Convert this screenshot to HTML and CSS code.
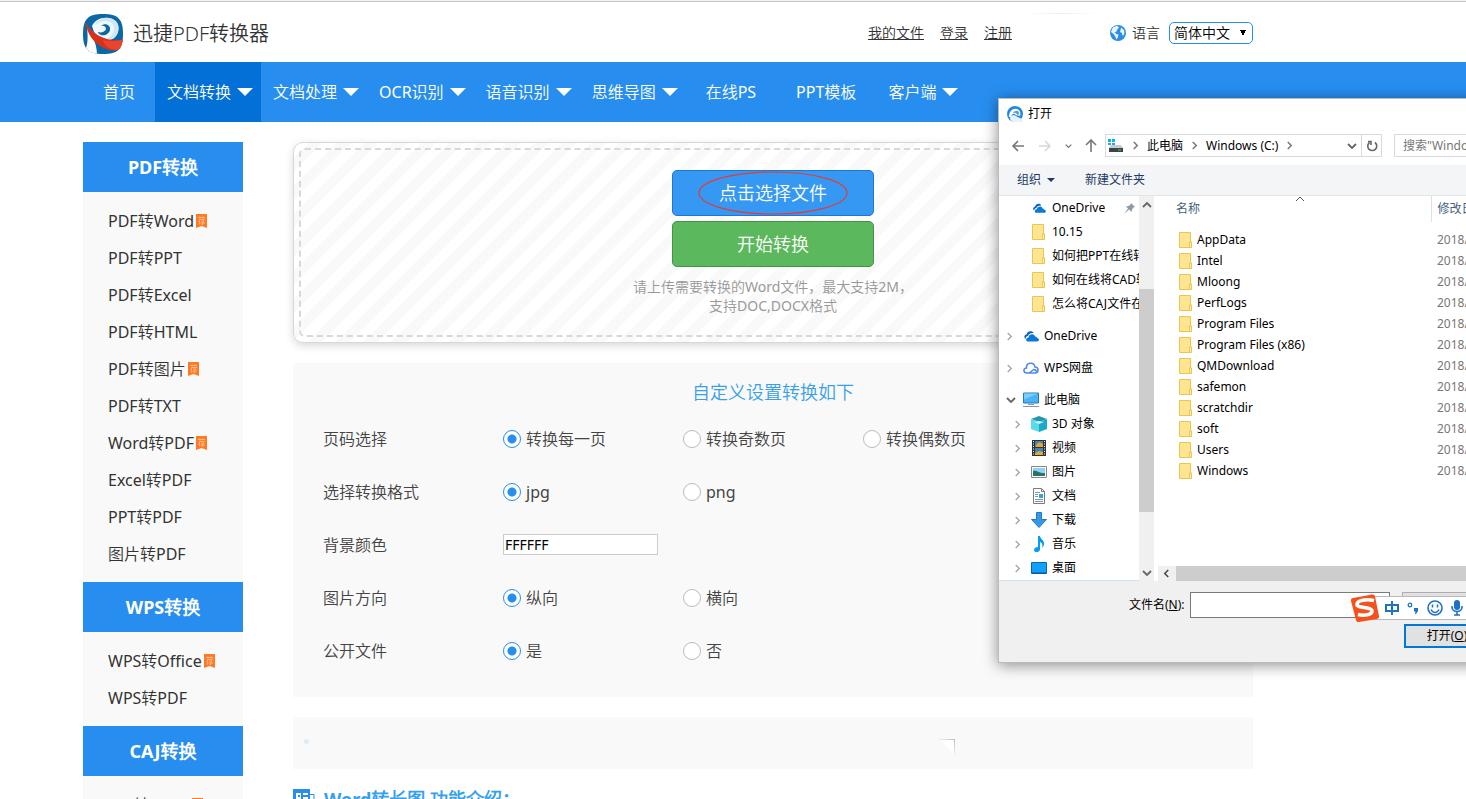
FILE: index.html
```html
<!DOCTYPE html>
<html lang="zh-CN">
<head>
<meta charset="utf-8">
<title>迅捷PDF转换器</title>
<link rel="stylesheet" href="styles.css">
</head>
<body>
<svg class="defs" aria-hidden="true">
  <symbol id="folder" viewBox="0 0 14 16"><path d="M.5.5h11v9.5h1v5.5H.5z" fill="#ffe58f" stroke="#e8c650"/><path d="M10.500 15.500v-5.500h2v5.500z" fill="#ffefb5" stroke="#e8c650"/></symbol>
  <symbol id="cloud" viewBox="0 0 16 12"><path d="M2 8.500C.5 6.500 2 4.500 3.500 4.500 4 1.500 7 .5 9 1.500c1 .5 1.500 1 1.800 1.700C8 2.800 5.500 4 5 6 3.500 6.200 2.800 7 2.600 8.700z" fill="#0f62b8"/><path d="M5 11.500c-2.500 0-2.500-4 .5-4C6 4 11 3 12 6.500c1.500-.3 2 .8 2 1.500 2.500 0 2.500 3.500 0 3.500z" fill="#0a78d7"/></symbol>
  <symbol id="right" viewBox="0 0 8 10"><path d="M2 1l4 4-4 4" fill="none" stroke="currentColor" stroke-width="1.700"/></symbol>
  <symbol id="down" viewBox="0 0 10 8"><path d="M1 2l4 4 4-4" fill="none" stroke="currentColor" stroke-width="1.800"/></symbol>
  <symbol id="tag" viewBox="0 0 11 14"><path d="M0 0h11v14l-5.500-2L0 14z" fill="#ff7a22"/><path d="M2 3.500h7M4 2.500v2M7 2.500v2M3 5.500h6M4.500 5L2.500 8M3.500 7v3.500M5 7h3L6.500 8.500v2H5.500M4.500 9H9" stroke="#ffd9bd" stroke-width=".6" fill="none"/></symbol>
</svg>

<div class="page">
  <header class="header">
    <div class="container header-row">
      <a class="brand" href="#">
        <svg width="42" height="42" viewBox="0 0 42 42" aria-hidden="true">
          <defs><clipPath id="logo"><path d="M20 1C35 1 40 6 40 21s-5 20-20 20S0 36 0 21 5 1 20 1z"/></clipPath></defs>
          <g clip-path="url(#logo)">
            <path d="M0 0h42v42H0z" fill="#0a68a5"/>
            <path d="M4 14c4 9 10 14 10 28H5L2 37c3-5 3-14 2-23z" fill="#fff"/>
            <path d="M9 13C12 7 18 4 25 5c8 1 12 7 10 14-2 7-9 10-17 8l-7-8z" fill="#eff8fd"/>
            <path d="M26 5c8 1 11 7 9 14-2 6-9 9-15 7 6 0 11-4 11-10 0-5-3-8-9-8-4 0-8 2-10 5C13 8 20 4 26 5z" fill="#cfe7f6"/>
            <path d="M18 13c4-4 10-1 9 4-1 4-5 6-9 5-2-1-3-2-3-3 3 1 7 0 8-3 0-2-2-4-5-3z" fill="#0a68a5"/>
            <path d="M2 9c8 12 18 20 40 18v7c-7 5-16 4-23 0C10 29 5 22 2 9z" fill="#d7301b"/>
            <path d="M20 27c8 2 14 1 22-1v7c-5 4-11 5-16 2-2-1-6-6-6-8z" fill="#e8452e"/>
          </g>
        </svg>
        <span>迅捷PDF转换器</span>
      </a>
      <nav class="account">
        <a href="#">我的文件</a><a href="#">登录</a><a href="#">注册</a>
      </nav>
      <span class="faded"></span>
      <div class="lang">
        <svg width="16" height="16" viewBox="0 0 16 16" aria-hidden="true"><circle cx="8" cy="8" r="8" fill="#2a8ee8"/><path d="M2.500 3C4 1.500 6 1 7.500 1L9 2.500 7 5l-1 2-1.500.5 2 1.500 2 .5L8 12l-1.500 2.500L5 11 3.500 9 1 7zM11 2.500l3 2.500.5 3-1.500 3-1-1.500V8l-2-1 .500-2z" fill="#e6f4ff"/></svg>
        <label for="lang">语言</label>
        <select id="lang"><option>简体中文</option></select>
      </div>
    </div>
  </header>

  <nav class="mainnav">
    <div class="container nav-row">
      <a class="plain" href="#">首页</a>
      <a class="drop active" href="#">文档转换</a>
      <a class="drop" href="#">文档处理</a>
      <a class="drop" href="#">OCR识别</a>
      <a class="drop" href="#">语音识别</a>
      <a class="drop" href="#">思维导图</a>
      <a class="plain" href="#">在线PS</a>
      <a class="plain" href="#">PPT模板</a>
      <a class="drop" href="#">客户端</a>
    </div>
  </nav>

  <div class="container columns">
    <aside class="side">
      <h2>PDF转换</h2>
      <ul>
        <li><a href="#">PDF转Word<svg class="tag"><use href="#tag"/></svg></a></li>
        <li><a href="#">PDF转PPT</a></li>
        <li><a href="#">PDF转Excel</a></li>
        <li><a href="#">PDF转HTML</a></li>
        <li><a href="#">PDF转图片<svg class="tag"><use href="#tag"/></svg></a></li>
        <li><a href="#">PDF转TXT</a></li>
        <li><a href="#">Word转PDF<svg class="tag"><use href="#tag"/></svg></a></li>
        <li><a href="#">Excel转PDF</a></li>
        <li><a href="#">PPT转PDF</a></li>
        <li><a href="#">图片转PDF</a></li>
      </ul>
      <h2>WPS转换</h2>
      <ul>
        <li><a href="#">WPS转Office<svg class="tag"><use href="#tag"/></svg></a></li>
        <li><a href="#">WPS转PDF</a></li>
      </ul>
      <h2>CAJ转换</h2>
      <ul>
        <li><a href="#">CAJ转Word<svg class="tag"><use href="#tag"/></svg></a></li>
      </ul>
    </aside>

    <main class="main">
      <section class="upload">
        <div class="dropzone">
          <button class="btn pick" type="button">点击选择文件
            <svg class="ring" viewBox="0 0 150 44" aria-hidden="true"><ellipse cx="75" cy="22" rx="74" ry="21" fill="none" stroke="#e23b3b" stroke-width="1.200"/></svg>
          </button>
          <button class="btn start" type="button">开始转换</button>
          <p>请上传需要转换的Word文件，最大支持2M，<br>支持DOC,DOCX格式</p>
        </div>
      </section>

      <form class="settings">
        <h3>自定义设置转换如下</h3>
        <div class="row" role="radiogroup" aria-labelledby="l1"><span id="l1">页码选择</span>
          <label><input type="radio" name="pages" checked>转换每一页</label>
          <label><input type="radio" name="pages">转换奇数页</label>
          <label><input type="radio" name="pages">转换偶数页</label></div>
        <div class="row" role="radiogroup" aria-labelledby="l2"><span id="l2">选择转换格式</span>
          <label><input type="radio" name="format" checked>jpg</label>
          <label><input type="radio" name="format">png</label></div>
        <div class="row"><label for="bg">背景颜色</label><input class="color" id="bg" type="text" value="FFFFFF"></div>
        <div class="row" role="radiogroup" aria-labelledby="l3"><span id="l3">图片方向</span>
          <label><input type="radio" name="orient" checked>纵向</label>
          <label><input type="radio" name="orient">横向</label></div>
        <div class="row" role="radiogroup" aria-labelledby="l4"><span id="l4">公开文件</span>
          <label><input type="radio" name="public" checked>是</label>
          <label><input type="radio" name="public">否</label></div>
      </form>

      <div class="strip">
        <i class="dot"></i>
        <svg class="corner" viewBox="0 0 18 18" aria-hidden="true">
          <defs>
            <linearGradient id="fadex"><stop offset="0" stop-color="#bbb" stop-opacity="0"/><stop offset="1" stop-color="#bbb"/></linearGradient>
            <linearGradient id="fadey" x2="0" y2="1"><stop offset="0" stop-color="#bbb"/><stop offset="1" stop-color="#bbb" stop-opacity="0"/></linearGradient>
          </defs>
          <path d="M4 1h13v14z" fill="#fff"/><path d="M0 0h18v1H0z" fill="url(#fadex)"/><path d="M17 0h1v18h-1z" fill="url(#fadey)"/>
        </svg>
      </div>

      <h3 class="intro">
        <svg width="22" height="20" viewBox="0 0 22 20" aria-hidden="true"><path d="M0 0h17v20H0z" fill="#278ef0"/><path d="M3 4h5v6H3zM10 4h5v2h-5zM10 8h5v2h-5zM3 12h12v2H3z" fill="#fff"/><path d="M5 6h2v2H5z" fill="#278ef0"/><path d="M17 5.500h4v14h-4" fill="none" stroke="#278ef0"/></svg>
        Word转长图 功能介绍：
      </h3>
    </main>
  </div>

  <div class="dialog" role="dialog" aria-label="打开">
    <div class="titlebar">
      <svg width="16" height="16" viewBox="0 0 16 16" aria-hidden="true"><circle cx="8" cy="8" r="8" fill="#2886dc"/><path d="M2 11C2 5 6 2 10 3c3 1 4 4 3 7-2-1-3 0-4-1-2-2-4-2-5 2z" fill="#fff"/><path d="M9 5c3-1 4 3 2 4-1 0-2-3-5-2 0-1 1-2 3-2z" fill="#4f9de6"/><path d="M3 12c1-3 4-4 6-2s4 1 7 4v2H7c-2 0-4-2-4-4z" fill="#e8f2fc"/></svg>
      打开
    </div>
    <div class="address">
      <div class="arrows">
        <svg width="14" height="12" viewBox="0 0 14 12"><path d="M7 1L2 6l5 5M2 6h11" fill="none" stroke="#777" stroke-width="1.600"/></svg>
        <svg width="14" height="12" viewBox="0 0 14 12"><path d="M7 1l5 5-5 5M12 6H1" fill="none" stroke="#d8d8d8" stroke-width="1.600"/></svg>
        <svg width="7" height="6" viewBox="0 0 10 8" class="dim"><use href="#down"/></svg>
        <svg width="12" height="13" viewBox="0 0 12 13"><path d="M1 6l5-5 5 5M6 1v12" fill="none" stroke="#777" stroke-width="1.600"/></svg>
      </div>
      <div class="path">
        <svg width="16" height="14" viewBox="0 0 16 14"><path d="M0 0h3v3H0zM4 0h3v3H4zM0 4h3v2H0zM4 4h3v2H4z" fill="#12b0ef"/><path d="M3 6h10l2 3H1z" fill="#c9cccf"/><path d="M1 9h14v4H1z" fill="#3f4448"/><path d="M10 10.500h3v1h-3z" fill="#36d23f"/></svg>
        <svg class="chev"><use href="#right"/></svg><span>此电脑</span>
        <svg class="chev"><use href="#right"/></svg><span>Windows (C:)</span>
        <svg class="chev"><use href="#right"/></svg>
        <svg class="chev-down"><use href="#down"/></svg>
      </div>
      <button class="refresh" type="button" aria-label="刷新"><svg width="12" height="12" viewBox="0 0 12 12"><path d="M9 2.500a4.500 4.500 0 1 1-5.500 0M2 1.500h3v3.500" fill="none" stroke="#666" stroke-width="1.600"/></svg></button>
      <input class="search" type="search" aria-label="搜索" placeholder="搜索&quot;Windows (C:)&quot;">
    </div>
    <div class="toolbar">
      <button type="button">组织<i class="caret"></i></button>
      <button type="button">新建文件夹</button>
    </div>
    <div class="panes">
      <ul class="tree">
        <li class="quick"><svg class="i16"><use href="#cloud"/></svg><span>OneDrive</span><svg class="pin" width="11" height="11" viewBox="0 0 11 11"><path d="M7 0l4 4-1.500.5L8 6.500 7.500 9 5 6.500 0 11l4-5.500L2 3.500 4.500 3 6.500 1.500z" fill="#8d9ba8"/></svg></li>
        <li class="quick"><svg class="fold"><use href="#folder"/></svg><span>10.15</span></li>
        <li class="quick"><svg class="fold"><use href="#folder"/></svg><span>如何把PPT在线转</span></li>
        <li class="quick"><svg class="fold"><use href="#folder"/></svg><span>如何在线将CAD转</span></li>
        <li class="quick"><svg class="fold"><use href="#folder"/></svg><span>怎么将CAJ文件在</span></li>
        <li class="root"><svg class="chev"><use href="#right"/></svg><svg class="i16"><use href="#cloud"/></svg><span>OneDrive</span></li>
        <li class="root"><svg class="chev"><use href="#right"/></svg><svg class="i16" viewBox="0 0 16 12"><path d="M4 11C0 11 0 6 3.500 6 3 0 11-.5 12 5c4 0 4 6 0 6zM6 11l5-3.500c2 0 3 2 2 3" fill="none" stroke="#4e86ea" stroke-width="1.500"/></svg><span>WPS网盘</span></li>
        <li class="root"><svg class="chev-down dark"><use href="#down"/></svg><svg class="i16" viewBox="0 0 16 15"><path d="M.5.500h15v10H.5z" fill="#46b4f5" stroke="#2679b5"/><path d="M1 7L15 1H1z" fill="#7dccfa"/><path d="M0 14h16M5 12h6" stroke="#8496a6"/></svg><span>此电脑</span></li>
        <li class="child"><svg class="chev"><use href="#right"/></svg><svg class="i16" viewBox="0 0 16 16"><path d="M0 3l8-3 8 3-8 3z" fill="#2396ac"/><path d="M0 3l8 3v10l-8-3z" fill="#5ddae8"/><path d="M16 3L8 6v10l8-3z" fill="#19a9cb"/><path d="M3 6l5-1 5 1-5 2z" fill="#c4f5fa"/></svg><span>3D 对象</span></li>
        <li class="child"><svg class="chev"><use href="#right"/></svg><svg class="i16" viewBox="0 0 16 16"><path d="M1 0h14v16H1z" fill="#333"/><path d="M4 1h8v6H4zM4 8h8v7H4z" fill="#3b82cc"/><path d="M5 5l3-3 4 2v3H5zM4 13l4-2 4 1v3H4z" fill="#e3a72b"/><path d="M2.500 1v15M13.500 1v15" stroke="#eee" stroke-dasharray="1 1.500"/></svg><span>视频</span></li>
        <li class="child"><svg class="chev"><use href="#right"/></svg><svg class="i16" viewBox="0 0 16 12"><path d="M.5.500h15v11H.5z" fill="#fff" stroke="#888"/><path d="M2 2h12v8H2z" fill="#8fd2f5"/><path d="M2 5c4-1 7 3 12 2v3H2z" fill="#2e7266"/></svg><span>图片</span></li>
        <li class="child"><svg class="chev"><use href="#right"/></svg><svg class="i16" viewBox="0 0 16 16"><path d="M2.500.500h8l3 3v12h-11z" fill="#fff" stroke="#7c7c7c"/><path d="M10.500.500v3h3" fill="none" stroke="#7c7c7c"/><path d="M4 6.500h3M4 8.500h3M4 4.500h5M4 11.500h8M4 13.500h8" stroke="#8794a0"/><path d="M8 6h4v4H8z" fill="#31a2e3"/></svg><span>文档</span></li>
        <li class="child"><svg class="chev"><use href="#right"/></svg><svg class="i16" viewBox="0 0 16 16"><path d="M5.500.500h5v7h5L8 15.500.5 7.500h5z" fill="#3497e8" stroke="#2578bd"/></svg><span>下载</span></li>
        <li class="child"><svg class="chev"><use href="#right"/></svg><svg class="i16" viewBox="0 0 16 16"><path d="M7 0h2c0 3 5 4 4 9-.3 1-1 2-2 3 1-4 0-5-2-6v7c0 4-6 4-6 1 0-2 2-3 4-3z" fill="#069cf4"/></svg><span>音乐</span></li>
        <li class="child"><svg class="chev"><use href="#right"/></svg><svg class="i16" viewBox="0 0 16 12"><path d="M.5.500h15v11H.5z" fill="#12a0ff" stroke="#0b66a5"/><path d="M1 11h14" stroke="#0b528a"/></svg><span>桌面</span></li>
      </ul>
      <div class="vscroll"><svg class="chev-down up"><use href="#down"/></svg><i></i><svg class="chev-down"><use href="#down"/></svg></div>
      <div class="files">
        <table>
          <thead><tr><th class="name">名称<svg class="sort" viewBox="0 0 10 6"><path d="M1 5l4-4 4 4" fill="none" stroke="#555"/></svg></th><th>修改日期</th></tr></thead>
          <tbody>
            <tr><td><svg class="fold"><use href="#folder"/></svg>AppData</td><td>2018/</td></tr>
            <tr><td><svg class="fold"><use href="#folder"/></svg>Intel</td><td>2018/</td></tr>
            <tr><td><svg class="fold"><use href="#folder"/></svg>Mloong</td><td>2018/</td></tr>
            <tr><td><svg class="fold"><use href="#folder"/></svg>PerfLogs</td><td>2018/</td></tr>
            <tr><td><svg class="fold"><use href="#folder"/></svg>Program Files</td><td>2018/</td></tr>
            <tr><td><svg class="fold"><use href="#folder"/></svg>Program Files (x86)</td><td>2018/</td></tr>
            <tr><td><svg class="fold"><use href="#folder"/></svg>QMDownload</td><td>2018/</td></tr>
            <tr><td><svg class="fold"><use href="#folder"/></svg>safemon</td><td>2018/</td></tr>
            <tr><td><svg class="fold"><use href="#folder"/></svg>scratchdir</td><td>2018/</td></tr>
            <tr><td><svg class="fold"><use href="#folder"/></svg>soft</td><td>2018/</td></tr>
            <tr><td><svg class="fold"><use href="#folder"/></svg>Users</td><td>2018/</td></tr>
            <tr><td><svg class="fold"><use href="#folder"/></svg>Windows</td><td>2018/</td></tr>
          </tbody>
        </table>
        <div class="hscroll"><svg class="chev back"><use href="#right"/></svg><i></i></div>
      </div>
    </div>
    <div class="footer">
      <div class="filename">
        <label for="fname">文件名(<u>N</u>):</label>
        <input id="fname" type="text">
        <button class="filter" type="button" aria-label="文件类型"></button>
      </div>
      <button class="open" type="button">打开(<u>O</u>)</button>
    </div>
  </div>

  <div class="ime">
    <svg width="28" height="28" viewBox="0 0 28 28" aria-hidden="true"><path d="M2 4L21 .5c2-.3 2.500.5 3 2L28 22c.3 2-.5 2.500-2 3L8 28c-2 .3-2.500-.5-3-2L0 7c-.3-2 .5-2.700 2-3z" fill="#f4511c"/><path d="M23 6.500C15 5 6 6 6 10.500c0 4 15 2 15 6.500 0 4-8 5-14 3.500" fill="none" stroke="#fff" stroke-width="3.600"/></svg>
    <svg width="14" height="14" viewBox="0 0 14 14" aria-hidden="true"><path d="M1 4h12v6H1zM7 0v14" fill="none" stroke="#1d72c8" stroke-width="2"/></svg>
    <svg width="12" height="12" viewBox="0 0 12 12" aria-hidden="true"><circle cx="3" cy="3" r="1.800" fill="none" stroke="#1d72c8" stroke-width="1.300"/><path d="M7 6h4v3l-2 3H8l.500-2.500H7z" fill="#1d72c8"/></svg>
    <svg width="16" height="16" viewBox="0 0 16 16" aria-hidden="true"><circle cx="8" cy="8" r="7" fill="none" stroke="#1d72c8" stroke-width="1.600"/><path d="M5.500 4.500v3M10.500 4.500v3M4 9.500c2 4 6 4 8 0" fill="none" stroke="#1d72c8" stroke-width="1.500"/></svg>
    <svg width="12" height="16" viewBox="0 0 12 16" aria-hidden="true"><rect x="3" width="6" height="10" rx="3" fill="#1d72c8"/><path d="M1 6v1c0 6 10 6 10 0V6M6 11v4M3 15h6" fill="none" stroke="#1d72c8" stroke-width="1.600"/></svg>
  </div>
</div>
</body>
</html>
```

FILE: styles.css
```css
* { box-sizing: border-box; }
body { margin: 0; background: #fff; color: #333; font: 16px/24px "Noto Sans", "Noto Sans CJK SC DemiLight", "Noto Sans CJK SC", sans-serif; }
h2, h3, p, ul { margin: 0; padding: 0; }
ul { list-style: none; }
a { color: inherit; text-decoration: none; }
button, input, select { font: inherit; color: inherit; }
button { padding: 0; border: 0; background: none; }
svg { flex: none; }
.defs { position: absolute; width: 0; height: 0; }
.page { position: relative; height: 100vh; overflow: hidden; }
.container { max-width: 1170px; margin-left: 83px; }

.header { border-top: 1px solid #f2f2f2; }
.header::before { content: ""; display: block; height: 1px; margin-bottom: -1px; background: #c8c8c8; }
.header-row { display: flex; align-items: center; height: 61px; }
.brand { display: flex; align-items: center; gap: 8px; margin-top: 5px; color: #333; font-size: 20px; font-weight: 300; }
.account { display: flex; gap: 16px; margin-left: auto; margin-top: 2px; font-size: 14px; }
.account a { text-decoration: underline; }
.faded { width: 76px; height: 38px; margin: 0 11px; background: linear-gradient(to right, #fff, #eee, #fff) top / 100% 1px no-repeat; }
.lang { display: flex; align-items: center; gap: 6px; margin-top: 2px; font-size: 14px; }
.lang select { appearance: none; width: 84px; height: 22px; margin-left: 3px; padding: 0 4px; border: 1px solid #278ef0; border-radius: 5px; color: #000; line-height: 20px;
  background: linear-gradient(to bottom right, #000 50%, transparent 50%) 73px 7px / 3px 6px no-repeat, linear-gradient(to bottom left, #000 50%, transparent 50%) 70px 7px / 3px 6px no-repeat, #fff; }

.mainnav { background: #278ef0; color: #fff; }
.nav-row { display: flex; }
.nav-row a { display: flex; align-items: center; height: 60px; }
.plain { padding: 0 20px; }
.drop { padding: 0 8px 0 12px; gap: 6px; }
.drop::after { content: ""; border: 8px solid transparent; border-top-color: #fff; border-bottom: 0; }
.active { background: #0270d6; }

.columns { display: flex; gap: 50px; padding-top: 20px; }
.side { flex: 0 0 160px; background: #f9f9f9; }
.side h2 { background: #278ef0; color: #fff; font-size: 18px; line-height: 50px; text-align: center; }
.side ul { padding: 10px 0 10px 25px; }
.side li a { display: flex; align-items: center; height: 37px; }
.tag { width: 11px; height: 14px; margin-left: 2px; }

.main { flex: 1; min-width: 0; }
.upload { padding: 5px; border: 1px solid #d8d8d8; border-radius: 10px; box-shadow: 0 3px 8px rgba(0,0,0,.15); background: repeating-linear-gradient(135deg, #fff 0 10px, #f9f9f9 10px 20px); }
.dropzone { display: flex; flex-direction: column; align-items: center; padding: 20px 0; border: 2px dashed #d8d8d8; border-radius: 6px; }
.btn { position: relative; width: 202px; height: 46px; margin-bottom: 5px; border-radius: 5px; color: #fff; font-size: 18px; }
.pick { background: #3599f4; border: 1px solid #1d78d0; }
.start { background: #5cb85c; border: 1px solid #449344; }
.ring { position: absolute; inset: 0 25px; width: 150px; height: 44px; }
.dropzone p { padding-top: 5px; color: #999; font-size: 14px; line-height: 19px; text-align: center; }

.settings { margin-top: 20px; padding: 17px 30px 20px; background: #f9f9f9; color: #444; }
.settings h3 { padding-bottom: 8px; color: #38a0ea; font-size: 18px; font-weight: 400; line-height: 24px; text-align: center; }
.row { display: flex; align-items: center; height: 53px; }
.row > span, .row > label { width: 180px; }
.row > label { display: flex; align-items: center; gap: 5px; }
.row input[type=radio] { appearance: none; width: 18px; height: 18px; margin: 0; border: 1px solid #bbb; border-radius: 50%; background: #fff; }
.row input[type=radio]:checked { border-color: #278ef0; background: radial-gradient(circle, #278ef0 4px, #fff 5px); }
.color { width: 155px; height: 21px; padding: 0 1px; border: 1px solid #ccc; color: #000; font-size: 14px; }
.strip { display: flex; justify-content: space-between; height: 52px; margin-top: 20px; padding: 22px 298px 0 11px; background: #f9f9f9; }
.dot { width: 5px; height: 5px; border-radius: 50%; background: #dcedf7; }
.corner { width: 18px; height: 18px; }
.intro { display: flex; align-items: center; gap: 9px; margin-top: 17px; color: #38a0ea; font-size: 18px; line-height: 26px; white-space: nowrap; }

.dialog { position: absolute; left: 998px; top: 98px; width: 600px; border: 1px solid #bbb; background: #fff; box-shadow: 0 2px 14px rgba(0,0,0,.45); color: #000; font-family: "Noto Sans", "Noto Sans CJK SC", sans-serif; font-size: 12px; line-height: 20px; }
.titlebar { display: flex; align-items: center; gap: 5px; height: 30px; padding-left: 8px; }
.address { display: flex; height: 36px; padding: 5px 0 8px 12px; }
.arrows { display: flex; align-items: center; gap: 13px; width: 94px; }
.dim { color: #777; }
.path { display: flex; align-items: center; gap: 8px; width: 257px; border: 1px solid #d9d9d9; padding: 0 4px 0 2px; }
.path .chev-down { margin-left: auto; }
.chev { width: 7px; height: 9px; color: #777; }
.chev-down { width: 10px; height: 8px; color: #666; }
.refresh { display: flex; align-items: center; justify-content: center; width: 20px; border: 1px solid #d9d9d9; border-left: 0; }
.search { width: 190px; margin-left: 12px; padding: 0 8px; border: 1px solid #d9d9d9; background: #fff; }
.search::placeholder { color: #777; }
.toolbar { display: flex; gap: 30px; height: 31px; padding-left: 18px; background: #f4f5f7; border-bottom: 1px solid #e3e5e8; color: #1c3a66; }
.toolbar button { display: flex; align-items: center; gap: 6px; }
.caret { border: 4px solid transparent; border-top-color: #1c3a66; border-bottom: 0; }
.panes { display: flex; height: 385px; }
.tree { width: 140px; overflow: hidden; border-bottom: 1px solid #cce4f7; }
.tree li { display: flex; align-items: center; height: 24px; white-space: nowrap; }
.tree span { overflow: hidden; }
.tree .chev { color: #aaa; }
.quick { padding-left: 33px; gap: 6px; }
.quick .i16, .quick .fold { width: 14px; }
.quick .pin { margin-left: auto; margin-right: 4px; }
.tree .root { margin-top: 8px; padding-left: 7px; gap: 5px; }
.root .chev { margin-right: 5px; }
.root .chev-down { margin: 0 2px 0 0; }
.child { padding-left: 15px; }
.child .i16 { margin: 0 5px 0 10px; }
.i16 { width: 16px; height: 16px; }
.fold { width: 14px; height: 16px; }
.vscroll { display: flex; flex-direction: column; align-items: center; width: 15px; padding: 5px 0 4px; background: #f0f0f0; }
.vscroll i { width: 15px; height: 223px; margin: 80px 0 auto; background: #cdcdcd; }
.up { transform: rotate(180deg); }
.files { display: flex; flex-direction: column; justify-content: space-between; flex: 1; padding-left: 4px; }
.files table { table-layout: fixed; width: 100%; border-collapse: collapse; }
.files th { height: 26px; padding: 0 6px; color: #4a5f7d; font-weight: 400; text-align: left; }
.files .name { position: relative; width: 273px; padding-left: 18px; border-right: 1px solid #e0e0e0; }
.sort { position: absolute; left: 137px; top: 0; width: 10px; height: 6px; }
.files tbody::before { content: ""; display: block; height: 7px; }
.files td { height: 21px; padding: 0 6px; line-height: 20px; }
.files td + td { color: #777; }
.files td:first-child { padding-left: 21px; }
.files td .fold { margin-right: 4px; vertical-align: middle; }
.hscroll { display: flex; align-items: center; height: 15px; background: #f0f0f0; }
.hscroll i { flex: 1; height: 15px; margin-left: 6px; background: #cdcdcd; }
.back { transform: rotate(180deg); margin-left: 5px; color: #444; }
.footer { height: 81px; padding-top: 11px; background: #f0f0f0; }
.filename { display: flex; align-items: center; padding-left: 130px; }
.filename input { width: 200px; height: 26px; margin-left: 5px; border: 1px solid #7a7a7a; background: #fff; }
.filter { width: 170px; height: 26px; margin-left: 12px; border: 1px solid #adadad; background: #e1e1e1; }
.open { width: 86px; height: 24px; margin: 6px 0 0 405px; border: 2px solid #0078d7; background: #e1e1e1; }

.ime { position: absolute; left: 1364px; right: 0; top: 596px; display: flex; align-items: center; gap: 8px; height: 24px; border: 1px solid #b7b7c5; border-right: 0; background: #fff; }
.ime svg:first-child { margin: 0 -2px 0 -14px; }
```
